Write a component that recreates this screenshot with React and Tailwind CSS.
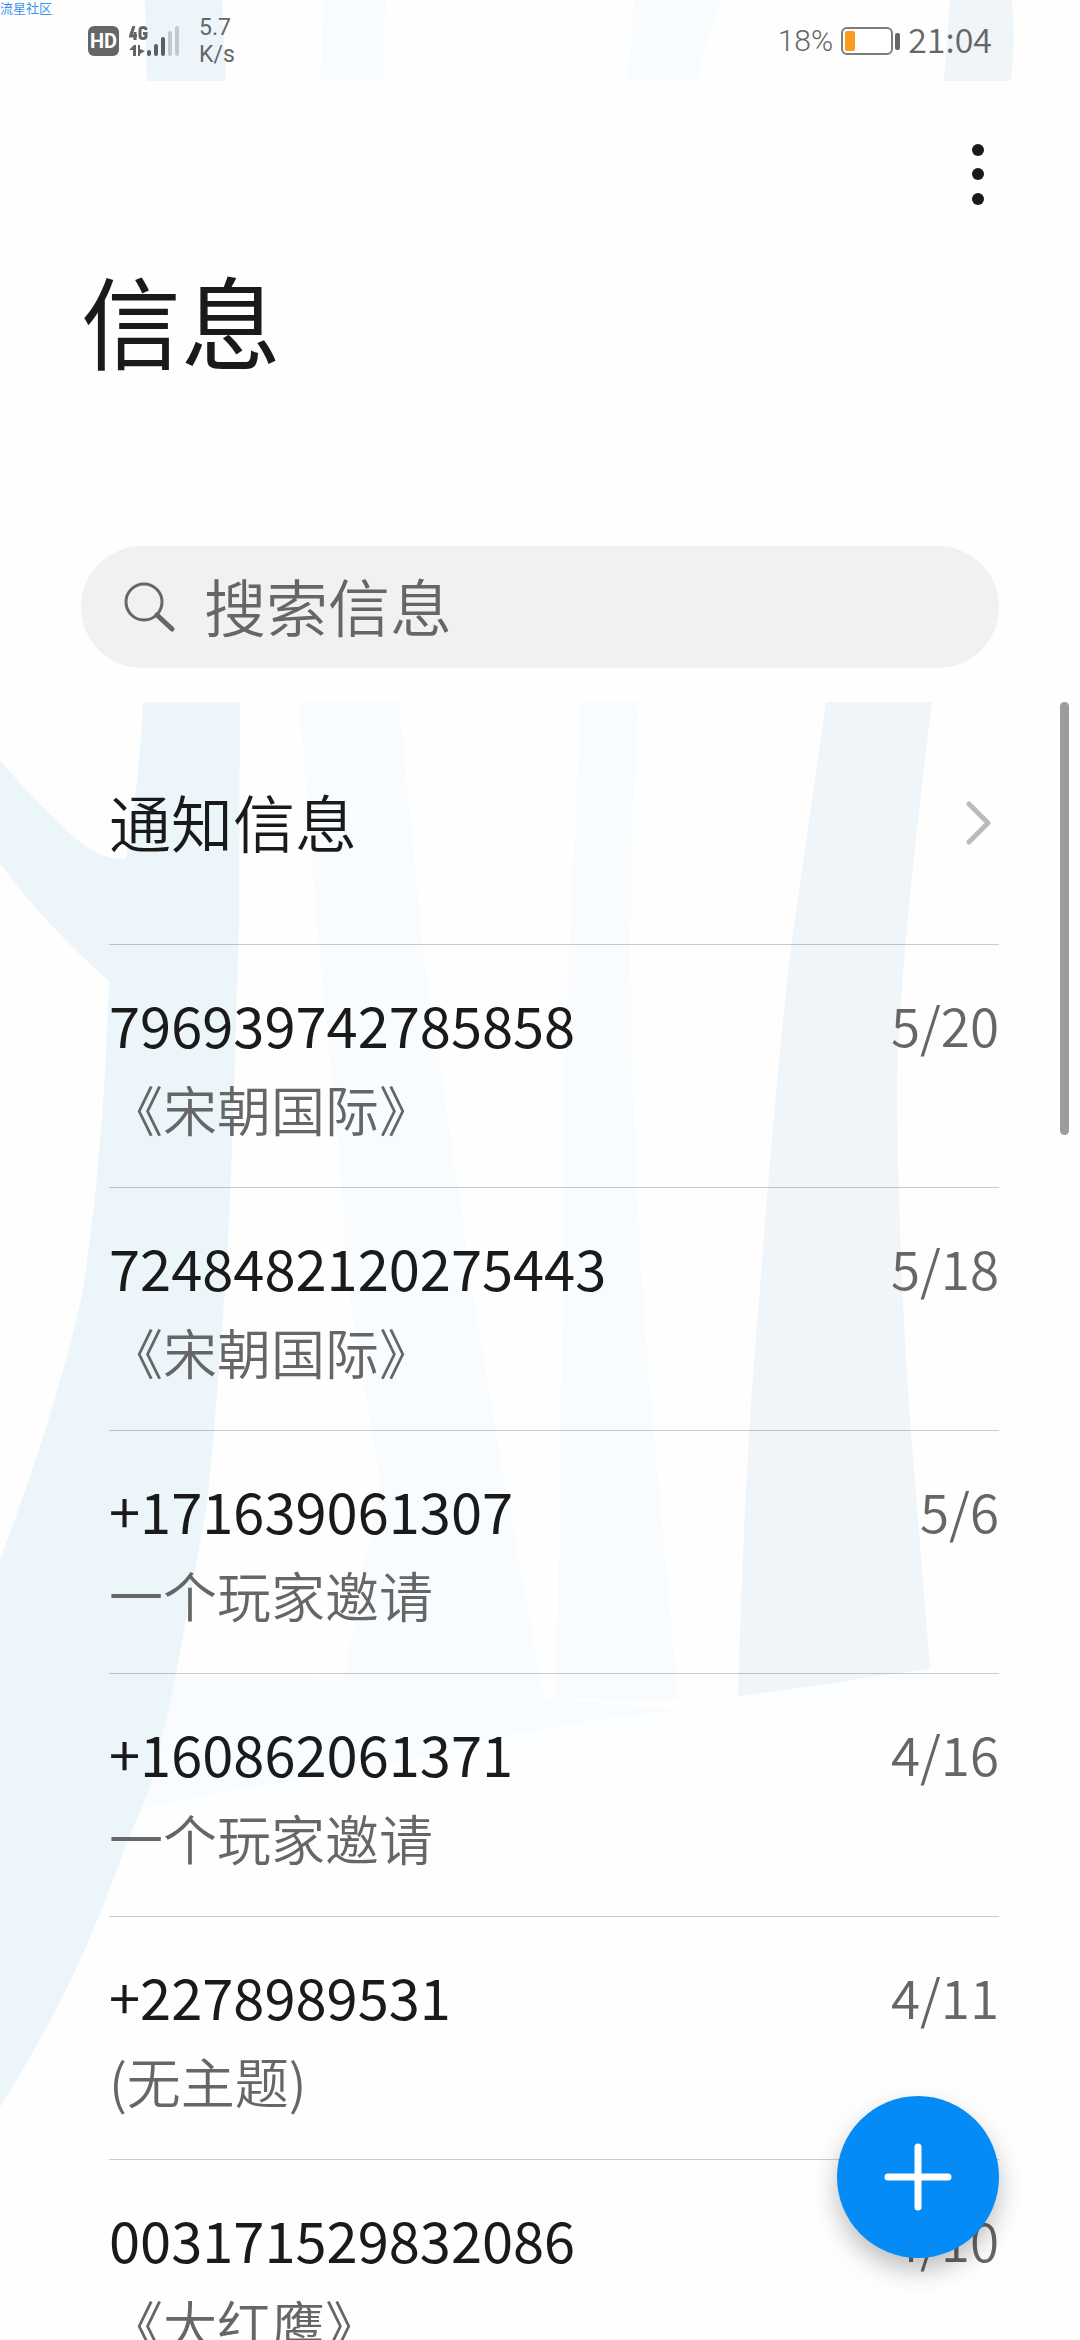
import { useState } from "react";

const MESSAGES = [
  { id: 1, sender: "796939742785858", preview: "《宋朝国际》", date: "5/20" },
  { id: 2, sender: "7248482120275443", preview: "《宋朝国际》", date: "5/18" },
  { id: 3, sender: "+171639061307", preview: "一个玩家邀请", date: "5/6" },
  { id: 4, sender: "+160862061371", preview: "一个玩家邀请", date: "4/16" },
  { id: 5, sender: "+2278989531", preview: "(无主题)", date: "4/11" },
  { id: 6, sender: "003171529832086", preview: "《大红鹰》", date: "4/10" },
];

// Signal strength bars, left to right
const BARS = [
  { x: 18, h: 6, on: true },
  { x: 25, h: 12, on: true },
  { x: 32, h: 19, on: true },
  { x: 39, h: 25, on: false },
  { x: 46, h: 30, on: false },
];

// Wallpaper stripes behind the status bar
const StatusWallpaper = () => (
  <svg className="absolute inset-0 h-full w-full" viewBox="0 0 1080 81" preserveAspectRatio="none" aria-hidden="true">
    <path d="M145 0H222L226 81H147Z" fill="#ecf5fa" />
    <path d="M323 0H386L383 81H321Z" fill="#f8fcff" />
    <path d="M634 0H722Q704 40 697 81H628Z" fill="#f8fcff" />
    <path d="M950 0H1012Q1016 40 1011 81H944Z" fill="#eff5f9" />
  </svg>
);

// Tree trunks and hills behind the message list
const ListWallpaper = () => (
  <svg className="absolute inset-0 h-full w-full" viewBox="0 702 1080 1638" preserveAspectRatio="none" aria-hidden="true">
    <path d="M131 1812Q210 1797 296 1780Q420 1745 590 1722L738 1696Q840 1675 930 1669Q1010 1661 1080 1660V1885Q900 1835 700 1825Q400 1820 124 1850Z" fill="#fcfeff" />
    <path d="M176 1674Q260 1674 344 1680L544 1698L680 1710Q590 1719 500 1737Q400 1765 296 1780Q200 1795 131 1812Z" fill="#f8fcff" />
    <path d="M299 702H399L424 958L461 1207L475 1309L506 1489L544 1698L344 1680L380 1481L348 1290L341 1172L320 958Z" fill="#f8fcff" />
    <path d="M581 702H639Q625 900 634 1111Q640 1290 654 1432L678 1699L556 1699L563 1290Q562 1100 569 954Z" fill="#f8fcff" />
    <path d="M826 702H932Q895 1000 897 1111Q900 1290 911 1432L930 1669Q875 1675 830 1684L738 1696Q745 1450 760 1290Q772 1120 790 954Z" fill="#eff5f9" />
    <path d="M143 702H240L239 920L236 1019Q232 1180 225 1290Q213 1450 207 1504L176 1674Q160 1750 150 1787L124 1850Q85 1960 41 2037Q20 2076 0 2107V1560Q60 1400 83 1290Q104 1150 109 981Q50 930 0 864V760Q30 797 76 839Q105 862 126 859Q140 780 143 702Z" fill="#ecf5fa" />
  </svg>
);

const SignalIcon = () => (
  <svg className="h-[30px] w-[52px]" viewBox="0 0 52 30" aria-hidden="true">
    <g fill="none" stroke="#626466" strokeWidth="3">
      <path d="M5 0L1.500 10H8M6 6V14" />
      <path d="M17 4Q17 1.500 14 1.500Q11 1.500 11 4V10Q11 12.500 14 12.500Q17 12.500 17 10V7.500H14" />
    </g>
    <path d="M0 24L5 19H7V30H4V24ZM9 19H11V23L16 25L11 28V30H9Z" fill="#626466" />
    {BARS.map((b) => (
      <rect key={b.x} x={b.x} y={30 - b.h} width="4" height={b.h} rx="2" fill={b.on ? "#596065" : "#c2c9d0"} />
    ))}
  </svg>
);

const BatteryIcon = () => (
  <svg className="h-[28px] w-[60px]" viewBox="0 0 60 28" aria-hidden="true">
    <rect x="1" y="1" width="50" height="26" rx="5" fill="#fff" stroke="#7c7c7c" strokeWidth="2" />
    <rect x="4" y="4" width="10" height="20" rx="2" fill="#f99b1e" />
    <rect x="54" y="6" width="5" height="17" rx="2" fill="#666" />
  </svg>
);

const StatusBar = () => (
  <header className="relative flex h-[81px] shrink-0 items-center justify-between px-[88px] text-[#666]">
    <StatusWallpaper />
    <span className="absolute left-0 top-0 text-[13px] leading-[16px] text-[#3b93f0]">流星社区</span>
    <div className="relative flex items-center">
      <span className="flex h-[30px] w-[31px] items-center justify-center rounded-md bg-[#666] font-['Roboto'] text-[20px] font-bold text-white">
        HD
      </span>
      <span className="ml-[10px]">
        <SignalIcon />
      </span>
      <span className="ml-[18px] font-['Roboto'] text-[23px] leading-[27px]">
        5.7
        <br />
        K/s
      </span>
    </div>
    <div className="relative flex items-center font-[350] leading-[40px]">
      <span className="font-['Roboto'] text-[30px]">18%</span>
      <span className="ml-[8px] mr-[7px]">
        <BatteryIcon />
      </span>
      <span className="pb-[3px] text-[34px]">21:04</span>
    </div>
  </header>
);

export default function App() {
  const [query, setQuery] = useState("");

  return (
    <div className="relative flex h-screen flex-col overflow-hidden bg-[#fefefe] font-['Noto_Sans_CJK_SC',sans-serif] text-[#1a1a1a]">
      <StatusBar />

      {/* Title and search */}
      <div className="flex shrink-0 flex-col px-[81px] pb-[34px]">
        <div className="flex h-[178px] justify-end pt-[57px]">
          <button type="button" aria-label="更多" className="h-[72px] w-[42px]">
            <svg className="h-full w-full" viewBox="0 0 42 72" fill="#1a1a1a" aria-hidden="true">
              <circle cx="21" cy="12" r="6" />
              <circle cx="21" cy="36" r="6" />
              <circle cx="21" cy="61" r="6" />
            </svg>
          </button>
        </div>
        <h1 className="text-[100px] font-normal leading-[120px]">信息</h1>
        <label className="mt-[167px] flex h-[122px] items-center rounded-full bg-[#f1f1f1] pl-[43px] pr-10">
          <svg className="h-[52px] w-[52px] shrink-0" viewBox="0 0 52 52" fill="none" stroke="#666" strokeLinecap="round" aria-hidden="true">
            <circle cx="20" cy="21" r="18" strokeWidth="3" />
            <path d="M33 34L48 48" strokeWidth="5" />
          </svg>
          <input
            type="text"
            aria-label="搜索信息"
            placeholder="搜索信息"
            value={query}
            onChange={(e) => setQuery(e.target.value)}
            className="ml-[28px] min-w-0 flex-1 bg-transparent pb-[4px] text-[62px] font-[350] leading-[88px] outline-none placeholder:text-[#666]"
          />
        </label>
      </div>

      {/* Message list */}
      <main className="relative min-h-0 flex-1 overflow-hidden">
        <ListWallpaper />
        <div className="absolute right-[11px] top-0 h-[433px] w-[9px] rounded-full bg-[#9c9c9c]" />
        <div className="relative ml-[109px] mr-[81px] font-[350]">
          <a href="#notifications" className="flex h-[243px] items-center justify-between border-b border-black/20">
            <span className="pb-[4px] text-[62px] leading-[88px]">通知信息</span>
            <svg className="mr-[6px] h-[44px] w-[28px]" viewBox="0 0 28 44" fill="none" stroke="#b9bbbd" strokeWidth="5" strokeLinecap="round" strokeLinejoin="round" aria-hidden="true">
              <path d="M4 3L23 22L4 41" />
            </svg>
          </a>
          <ul>
            {MESSAGES.map((m) => (
              <li key={m.id} className="border-b border-black/20">
                <a href={`#message-${m.id}`} className="block h-[242px] pt-[39px]">
                  <div className="flex items-center justify-between leading-[80px]">
                    <span className="text-[56px] font-normal">{m.sender}</span>
                    <span className="text-[53px] text-[#666]">{m.date}</span>
                  </div>
                  <p className="text-[54px] leading-[90px] text-[#666]">{m.preview}</p>
                </a>
              </li>
            ))}
          </ul>
        </div>
      </main>

      <button
        type="button"
        aria-label="新建信息"
        className="absolute bottom-[82px] right-[81px] flex h-[162px] w-[162px] items-center justify-center rounded-full bg-[#058bf5] shadow-[0_12px_24px_rgba(0,0,0,0.25)]"
      >
        <svg className="h-[68px] w-[68px]" viewBox="0 0 68 68" stroke="#fff" strokeWidth="7" strokeLinecap="round" aria-hidden="true">
          <path d="M34 4V64M4 34H64" />
        </svg>
      </button>
    </div>
  );
}
